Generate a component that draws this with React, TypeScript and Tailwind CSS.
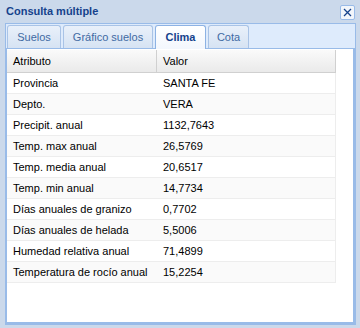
import React from 'react';

const rows: [string, string][] = [
  ['Provincia', 'SANTA FE'],
  ['Depto.', 'VERA'],
  ['Precipit. anual', '1132,7643'],
  ['Temp. max anual', '26,5769'],
  ['Temp. media anual', '20,6517'],
  ['Temp. min anual', '14,7734'],
  ['Días anuales de granizo', '0,7702'],
  ['Días anuales de helada', '5,5006'],
  ['Humedad relativa anual', '71,4899'],
  ['Temperatura de rocío anual', '15,2254'],
];

const tabs = [
  { label: 'Suelos', w: 'w-[54px]' },
  { label: 'Gráfico suelos', w: 'w-[90px]' },
  { label: 'Clima', w: 'w-[51px]', active: true },
  { label: 'Cota', w: 'w-[41px]' },
];

export default function App() {
  return (
    <div className="w-[360px] h-[328px] bg-[#cbd9eb] flex flex-col font-['Liberation_Sans',Arial,sans-serif] text-[11px] text-black overflow-hidden">
      {/* Title bar */}
      <div className="h-[23px] flex items-center justify-between pl-[6px] pr-[5px]">
        <span className="font-bold text-[11px] text-[#15428b]">Consulta múltiple</span>
        <button className="w-[15px] h-[15px] mt-[1px] bg-[#f2f6fb] border border-[#99bbe8] rounded-[2px] flex items-center justify-center">
          <svg width="9" height="9" viewBox="0 0 9 9">
            <path d="M1 1L8 8M8 1L1 8" stroke="#15428b" strokeWidth="1.3" />
          </svg>
        </button>
      </div>

      <div className="mx-[5px] w-[351px] flex-1 flex flex-col mb-[3px]">
        {/* Tab strip */}
        <div className="h-[25px] bg-[#deebfc] border border-[#99bbe8] border-b-0 flex items-end pl-[1px] gap-[2px]">
          {tabs.map(t => (
            <div
              key={t.label}
              className={`${t.w} rounded-t-[3px] border border-b-0 flex items-center justify-center ${
                t.active
                  ? 'bg-gradient-to-b from-white to-[#f3f7fd] border-[#8db2e3] font-bold text-[#15428b] h-[24px] -mb-px z-10'
                  : 'h-[23px] bg-gradient-to-b from-[#e9f0fa] to-[#d6e3f3] border-[#a9c3e6] text-[#416aa3]'
              }`}
            >
              {t.label}
            </div>
          ))}
        </div>

        {/* Body */}
        <div className="flex-1 bg-white border-l-2 border-r-[3px] border-b-[3px] border-t border-[#99bbe8] pt-[1px]">
          <div className="w-[329px]">
            <div className="h-[23px] flex bg-gradient-to-b from-[#fafafa] to-[#eaeaea] border-b border-[#d0d0d0]">
              <div className="w-[150px] border-r border-[#d0d0d0] flex items-center pl-[6px]">Atributo</div>
              <div className="flex-1 border-r border-[#d0d0d0] flex items-center pl-[6px]">Valor</div>
            </div>
            {rows.map(([a, v], i) => (
              <div
                key={a}
                className={`h-[21px] flex border-b border-r border-[#ededed] ${i % 2 === 1 ? 'bg-[#fafafa]' : 'bg-white'}`}
              >
                <div className="w-[150px] flex items-center pl-[6px]">{a}</div>
                <div className="flex-1 flex items-center pl-[6px]">{v}</div>
              </div>
            ))}
          </div>
        </div>
      </div>
    </div>
  );
}
